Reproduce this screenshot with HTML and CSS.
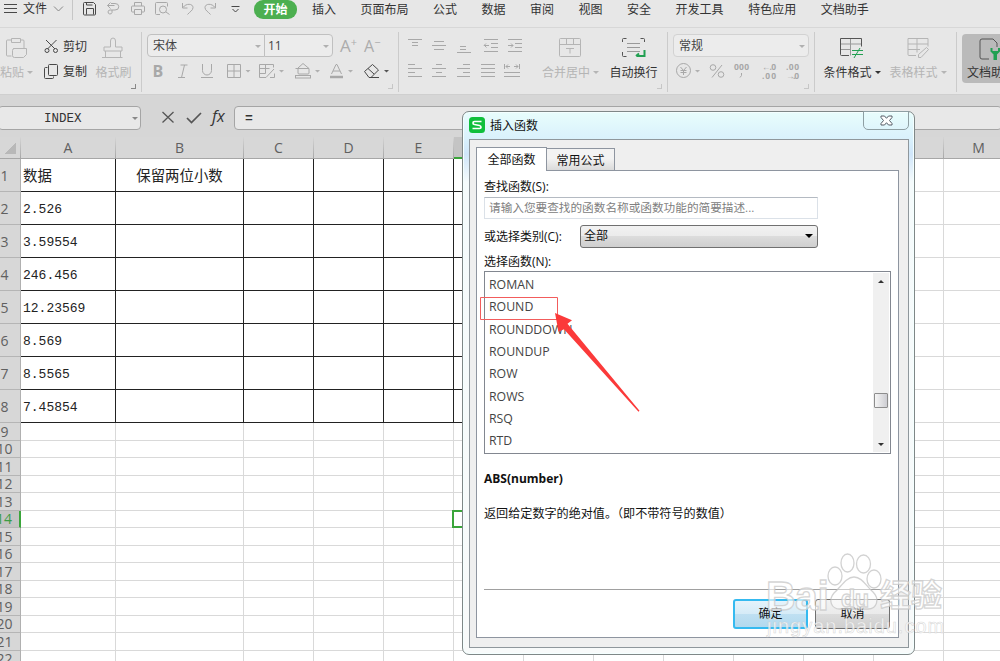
FILE: index.html
```html
<!DOCTYPE html>
<html lang="zh-CN">
<head>
  <meta charset="utf-8">
  <title>插入函数</title>
  <link rel="stylesheet" href="styles.css">
</head>
<body>
  <div class="menubar">
    <svg class="quick" width="250" height="20" viewBox="0 0 250 20">
      <g class="dark"><path d="M4 4.500h13M4 8.500h13M4 12.500h13"/></g>
      <g class="mid"><path d="M54 6.500l4.500 4.500 4.500-4.500"/></g>
      <path class="pale" d="M72.500 0v20"/>
      <g class="dark"><path d="M83.500 3.500q0-1 1-1h9l2 2v9.500q0 1-1 1h-10q-1 0-1-1zM86.500 14.500v-6h7v6M86.500 2.500v2.500h6"/></g>
      <g class="light">
        <path d="M111 3.500h4a3.500 3 0 0 1 0 6.500h-3v2.500a2 2 0 1 1-2-2.500h2M107.500 5.500h7M110.500 2.500l-3 3 3 3"/>
        <path d="M134.500 6v-3.500h7v3.500M134.500 12h-2q-1 0-1-1v-4q0-1 1-1h11q1 0 1 1v4q0 1-1 1h-2M134.500 9.500h7v5h-7z"/>
        <path d="M160 14.500h-3.500q-1 0-1-1v-10q0-1 1-1h10q1 0 1 1v3M166 12l3.500 2.500"/><circle cx="163" cy="9.500" r="3.500"/>
        <path d="M182.500 3v5h5M183 7.500c3-4.500 10-4 10 0c0 3-3 4-5.500 7"/>
        <path d="M215.500 3v5h-5M215 7.500c-3-4.500-10-4-10 0c0 3 3 4 5.500 7"/>
      </g>
      <path class="dark" d="M231.500 6.500h8M232.500 9l3 3 3-3"/>
    </svg>
    <span class="file">文件</span>
    <nav class="tabs">
      <span class="active">开始</span>
      <span>插入</span><span>页面布局</span><span>公式</span><span>数据</span><span>审阅</span><span>视图</span><span>安全</span><span>开发工具</span><span>特色应用</span><span>文档助手</span>
    </nav>
  </div>

  <div class="ribbon">
    <div class="group clipboard">
      <div class="tool paste off">
        <svg width="24" height="22"><path d="M6 3h-3.500q-1 0-1 1v14q0 1 1 1h4M16 3h2q1 0 1 1v7M6.500 1.500h9v4h-9zM8.500 11.500h13v6l-3 3h-9q-2 0-2-2v-5q0-2 2-2z"/></svg>
        <span>粘贴<i></i></span>
      </div>
      <div class="pair">
        <div><svg class="dark" width="15" height="15"><path d="M2 1l9 9M12.500 1l-9 9"/><circle cx="3" cy="11.500" r="2"/><circle cx="11.500" cy="11.500" r="2"/></svg>剪切</div>
        <div><svg class="dark" width="15" height="15"><path d="M4.500 1.500q0-1 1-1h7q1 0 1 1v9q0 1-1 1h-7q-1 0-1-1zM3.500 3.500h-2q-1 0-1 1v9q0 1 1 1h7q1 0 1-1v-1"/></svg>复制</div>
      </div>
      <div class="tool brush off">
        <svg width="22" height="22"><path d="M8.500 10v-6a2.500 3 0 0 1 5 0v6h6.500v4h-18v-4h6.500M3.500 14v6M18.500 14v6.500M0 20.500h20.500"/></svg>
        <span>格式刷</span>
      </div>
      <b class="corner strong"></b>
    </div>

    <div class="group font">
      <div class="boxes">
        <div class="combo family">宋体<i></i></div><div class="combo size">11<i></i></div>
        <span class="grow">A<sup>+</sup></span><span class="shrink">A<sup>−</sup></span>
      </div>
      <svg class="light" width="245" height="20" viewBox="147 61 245 20">
        <text x="152.500" y="76.500" class="t-bold">B</text>
        <path d="M180.500 65h7M178 77.500h7M184.500 65l-3 12.500"/>
        <path d="M202.500 64v6.500a4.500 4.500 0 0 0 9 0v-6.500M201 77.500h12"/>
        <path d="M227.500 64.500h13v13h-13zM234 64.500v13M227.500 71h13"/>
        <path d="M266 77.500h-6.500v-13h14v3M259.500 68.500h10M259.500 73.500h6M265.500 64.500v9M274 69l-8 8.500M270 77.500h4.500v-4"/>
        <path d="M303 63.500l6 5v4.500q0 1-1 1h-9q-1 0-1-1v-5zM295.500 68.500h13.500"/><rect x="295.500" y="75.500" width="15" height="2.500"/>
        <path d="M331.500 74l4.500-9.500h1l4.500 9.500M333 71h7"/><path d="M330 77h13" stroke-width="2.500"/>
        <path class="dark" d="M364.500 71.500l8-7 6 5.500-7.500 7.500h-2zM368 68.500l6 5.500M370 77.500h9"/>
        <path class="fill" d="M245.500 70h5l-2.500 2.500zM279 70h5l-2.500 2.500zM315 70h5l-2.500 2.500zM348 70h5l-2.500 2.500z"/>
        <path class="fill deep" d="M384 70h5l-2.500 2.500z"/>
      </svg>
      <b class="corner"></b>
    </div>

    <div class="group align">
      <svg class="light" width="118" height="42" viewBox="406 37 118 42">
        <path d="M408 39.500h14M412 42.500h6M412 45.500h6"/>
        <path d="M434 41.500h10M432 45.500h14M434 49.500h10"/>
        <path d="M460 46.500h6M460 49.500h6M457 52.500h14"/>
        <path d="M484 39.500h14M491 43.500h7M491 47.500h7M484 51.500h14M489 45.500h-5l2-2M484.500 45.500l2 2"/>
        <path d="M508 39.500h14M515 43.500h7M515 47.500h7M508 51.500h14M508 45.500h5l-2-2M513 45.500l-2 2"/>
        <path d="M408 64.500h7M408 68.500h14M408 72.500h7M408 76.500h14"/>
        <path d="M436 64.500h6M432 68.500h14M436 72.500h6M432 76.500h14"/>
        <path d="M463 64.500h7M457 68.500h13M463 72.500h7M457 76.500h13"/>
        <path d="M481 64.500h14M481 68.500h14M481 72.500h14M481 76.500h14"/>
        <path d="M504.500 64v5M519.500 64v5M510 66.500h-4l2-2M506 66.500l2 2M514 66.500h4l-2-2M518 66.500l-2 2M504 72.500h16M504 76.500h16"/>
      </svg>
      <div class="tool merge off">
        <svg width="24" height="22"><path d="M1.500 2.500q0-1 1-1h19q1 0 1 1v16q0 1-1 1h-19q-1 0-1-1zM1.500 7.500h21M8.500 1.500v6M15.500 1.500v6M8 11.500h8M12 11.500v5"/></svg>
        <span>合并居中<i></i></span>
      </div>
      <div class="tool wrap">
        <svg width="26" height="22"><path d="M1.500 5v-2.500q0-1 1-1h3M19.500 1.500h3q1 0 1 1v2.500M1.500 15v3.500q0 1 1 1h3"/><path class="gray" d="M6 6.500h13M6 10.500h13M6 14.500h13"/><path class="green thick" d="M23.500 13v6h-8M18 16.500l-3 2.500"/></svg>
        <span>自动换行</span>
      </div>
      <b class="corner"></b>
    </div>

    <div class="group number">
      <div class="combo format">常规<i></i></div>
      <svg class="light" width="132" height="20" viewBox="675 61 132 20">
        <circle cx="685.500" cy="70.500" r="7"/><path d="M682.500 67l3 3.500 3-3.500M685.500 70.500v4.500M682.500 70.500h6M682.500 72.500h6"/>
        <path class="fill" d="M697 70h5l-2.500 2.500z"/>
        <circle cx="715" cy="67.500" r="2.800"/><circle cx="723" cy="74.500" r="2.800"/><path d="M724 65l-10 12.500"/>
        <text x="736" y="70" textLength="15">000</text><path d="M743.500 73v2.500l-1.500 2"/>
        <text x="764" y="70" textLength="14">←.0</text><text x="764" y="79" textLength="14">.00</text>
        <text x="788" y="70" textLength="13">.00</text><text x="788" y="79" textLength="13">→.0</text>
      </svg>
      <b class="corner"></b>
    </div>

    <div class="group styles">
      <div class="tool cond">
        <svg width="24" height="22"><path class="gray" d="M2 7h20M11.500 1.500v17M2 12.500h10"/><path d="M10 18.500h-7.500q-1 0-1-1v-16h21v8"/><path class="green" d="M13 13.500h11M13 17.500h11M21 11l-6 10"/></svg>
        <span>条件格式<i></i></span>
      </div>
      <div class="tool cells off">
        <svg width="24" height="22"><path d="M10 18.500h-7q-1 0-1-1v-16h20v8M2 7h20M2 12.500h12M11 1.500v14M12.500 20.500v-3l8-7 2 2-7.500 8z"/></svg>
        <span>表格样式<i></i></span>
      </div>
    </div>

    <div class="helper tool">
      <svg width="26" height="22"><path d="M11 21h-7q-2 0-2-2v-16q0-2 2-2h11l4 4v4"/><path class="green thick" d="M13.500 10v3l3 3v6M21 10v3l-3 3v6M14 14h7"/></svg>
      <span>文档助手</span>
    </div>
  </div>

  <div class="formula">
    <div class="namebox">INDEX<i></i></div>
    <svg width="62" height="16"><path d="M1.500 2l11 10.500M12.500 2l-11 10.500" stroke-width="1.300"/><path d="M26 8l4.500 4.500 9.500-9.500" stroke-width="1.700"/></svg>
    <em>fx</em>
    <div class="input">=</div>
  </div>

  <div class="sheet" id="sheet"></div>

  <div class="dialog">
    <div class="title">
      <svg width="16" height="16"><rect width="16" height="16" rx="3.500" fill="#0fbf3c" stroke="none"/><path d="M12.500 4.500h-7q-1.500 0-1.500 1.500t1.500 1.500l5 1q1.500.4 1.500 1.700t-1.500 1.300h-7" fill="none" stroke="#fff" stroke-width="1.700"/></svg>
      <span>插入函数</span>
      <div class="close"><svg width="13" height="11"><path d="M1 1h3.500l2 2.300 2-2.300h3.500v1.500l-2.500 3 2.500 3v1.500h-3.500l-2-2.300-2 2.300h-3.500v-1.500l2.500-3-2.500-3z" fill="#fff" stroke="#565d66"/></svg></div>
    </div>
    <div class="client">
      <div class="dialog-tabs"><span class="on">全部函数</span><span>常用公式</span></div>
      <div class="pane">
        <label>查找函数(S):</label>
        <div class="search">请输入您要查找的函数名称或函数功能的简要描述...</div>
        <div class="category"><label>或选择类别(C):</label><div class="select">全部<i></i></div></div>
        <label class="choose">选择函数(N):</label>
        <div class="list">
          <ul>
            <li>ROMAN</li><li>ROUND</li><li>ROUNDDOWN</li><li>ROUNDUP</li><li>ROW</li><li>ROWS</li><li>RSQ</li><li>RTD</li>
          </ul>
          <div class="scroll"><i class="up"></i><b></b><i></i></div>
        </div>
        <h3>ABS(number)</h3>
        <p>返回给定数字的绝对值。（即不带符号的数值）</p>
        <div class="buttons"><button class="ok">确定</button><button>取消</button></div>
      </div>
    </div>
  </div>

  <!-- callout on the ROUND entry -->
  <svg class="callout" width="162" height="120" viewBox="480 296 162 120">
    <path d="M480.500 297.500h77v22h-77z" stroke="#f25c5c"/>
    <path class="arrow" d="M555 313l17 7.300-4.500 3.500 72 87-1 1-74.500-82.500-5.500 2.500z"/>
  </svg>

  <div class="watermark">
    <svg width="56" height="58"><ellipse cx="8" cy="23" rx="7" ry="9"/><ellipse cx="20.500" cy="10" rx="6.500" ry="9"/><ellipse cx="36.500" cy="11" rx="7" ry="9"/><ellipse cx="47" cy="26" rx="7" ry="9"/><path d="M27 24c8 0 12 9 19 15c7 7 4 17-5 17h-28c-9 0-12-9-6-16c7-6 12-16 20-16z"/></svg>
    <span class="bai">Bai</span><span class="du">du</span><span class="jing">经验</span>
    <span class="url">jingyan.baidu.com</span>
  </div>

  <script>
    const sheet = document.getElementById('sheet');
    const cols = ['', 'A', 'B', 'C', 'D', 'E', 'F', 'G', 'H', 'I', 'J', 'K', 'L', 'M'];
    const values = ['数据', '2.526', '3.59554', '246.456', '12.23569', '8.569', '8.5565', '7.45854'];

    function add(cls, text) {
      const cell = document.createElement('div');
      cell.className = cls;
      cell.textContent = text || '';
      sheet.appendChild(cell);
    }

    cols.forEach(function(name) {
      add(name === '' ? 'head all' : name === 'F' ? 'head picked' : 'head', name);
    });

    for (let r = 1; r <= 22; r++) {
      add(r === 14 ? 'num picked' : 'num', String(r));
      for (let c = 1; c < cols.length; c++) {
        let cls = 'cell';
        if (r <= 8 && c <= 6) cls += ' framed';
        if (r === 14 && c === 6) cls += ' cursor';
        if (r === 1 && c === 2) cls += ' center';
        let text = c === 1 ? values[r - 1] : (r === 1 && c === 2 ? '保留两位小数' : '');
        add(cls, text);
      }
    }
  </script>
</body>
</html>
```
FILE: styles.css
```css
* {
  box-sizing: border-box;
}

body {
  margin: 0;
  width: 1000px;
  height: 661px;
  overflow: hidden;
  position: relative;
  background: #d6d6d6;
  color: #333;
  font: 12px/16px "Open Sans", "Noto Sans CJK SC", sans-serif;
}

svg {
  display: block;
  flex: none;
  fill: none;
  stroke: #555;
}

i {
  display: inline-block;
  border: 3px solid transparent;
  border-top-color: currentColor;
  border-bottom: 0;
}

.dark { stroke: #484848; }
.mid { stroke: #888; }
.light { stroke: #a8a8a8; }
.pale { stroke: #c6c6c6; }
.gray { stroke: #999; }
.green { stroke: #22a052; }
.thick { stroke-width: 2; }
.fill { fill: #b0b0b0; stroke: none; }
.deep { fill: #555; }

.menubar {
  height: 28px;
  background: #e7e7e7;
  border-bottom: 1px solid #d7d7d7;
  display: flex;
  position: relative;
}

.file {
  position: absolute;
  left: 23px;
  top: 1px;
}

.tabs {
  display: flex;
  gap: 24.5px;
  height: 19px;
  margin-left: 4px;
  line-height: 20px;
  white-space: nowrap;
}

.tabs .active {
  background: #4caf50;
  color: #fff;
  font-weight: bold;
  border-radius: 9px;
  width: 43px;
  text-align: center;
  margin-right: -9.5px;
}

.ribbon {
  height: 67px;
  background: #e7e7e7;
  border-bottom: 1px solid #cfcfcf;
  display: flex;
  overflow: hidden;
}

.group {
  position: relative;
  height: 60px;
  margin-top: 4px;
  border-right: 1px solid #cbcbcb;
  flex: none;
}

.clipboard { width: 142px; display: flex; }
.font { width: 257px; padding: 2px 0 0 5px; }
.align { width: 269px; display: flex; padding-left: 7px; }
.align > svg { margin-top: 5px; }
.number { width: 147px; padding: 2px 0 0 5px; }
.styles { width: 142px; display: flex; }

.tool {
  display: flex;
  flex-direction: column;
  align-items: center;
  padding-top: 5px;
  white-space: nowrap;
}

.tool span {
  margin-top: 6px;
}

.tool i {
  margin: 0 0 3px 3px;
}

.off {
  color: #b5b5b5;
}

.off svg {
  stroke: #b5b5b5;
}

.paste { width: 33px; }
.brush { width: 41px; margin-left: 3px; }
.brush svg { margin-left: -2px; }
.merge { width: 55px; margin-left: 19px; }
.merge svg { margin-left: -2px; }
.wrap { width: 49px; margin-left: 11px; }
.cond { width: 56px; margin-left: 9px; }
.cells { width: 56px; margin-left: 10px; }

.cond svg {
  margin-left: -2px;
}

.pair {
  width: 46px;
  margin-left: 11px;
  padding-top: 7px;
}

.pair div {
  display: flex;
  gap: 4px;
  white-space: nowrap;
  margin-bottom: 9px;
}

.corner {
  position: absolute;
  right: 5px;
  bottom: 3px;
  width: 5px;
  height: 5px;
  border: solid #c6c6c6;
  border-width: 0 1px 1px 0;
}

.corner.strong {
  border-color: #888;
}

.boxes {
  display: flex;
  height: 27px;
}

.combo {
  height: 23px;
  border: 1px solid #c0c0c0;
  background: #ececec;
  display: flex;
  align-items: center;
  justify-content: space-between;
  padding: 1px 3px 0 5px;
  color: #444;
}

.combo i {
  color: #b0b0b0;
}

.family { width: 118px; border-radius: 4px 0 0 4px; }
.size { width: 69px; margin-left: -1px; padding-left: 3px; border-radius: 0 4px 4px 0; }
.format { width: 136px; margin-bottom: 4px; border-color: #d2d2d2; border-radius: 4px; }

.grow, .shrink {
  color: #acacac;
  font: 17px/24px "Open Sans", sans-serif;
  margin-left: 7px;
  white-space: nowrap;
}

.grow sup, .shrink sup {
  font-size: 11px;
  line-height: 0;
  vertical-align: 6px;
}

.shrink {
  margin-left: 7px;
  font-size: 16px;
}

svg text {
  font: bold 8.5px "Open Sans", sans-serif;
  fill: #a8a8a8;
  stroke: none;
}

svg .t-bold {
  font-size: 16px;
}

.helper {
  width: 60px;
  height: 49px;
  flex: none;
  margin: 6px 0 0 5px;
  padding: 4px 2px 0 0;
  background: #bababa;
  border-radius: 4px;
}

.helper span {
  margin-top: 5px;
}

.formula {
  height: 42px;
  padding-top: 11px;
  background: #d6d6d6;
  display: flex;
}

.namebox {
  width: 143px;
  height: 24px;
  margin-left: -2px;
  border: 1px solid #a5a5a5;
  border-radius: 4px;
  background: #e8e8e8;
  font: 12.5px/24px "Liberation Mono", monospace;
  padding-left: 45px;
  position: relative;
}

.namebox i {
  position: absolute;
  right: 2px;
  top: 10px;
  color: #888;
}

.formula svg {
  margin: 4px 0 0 20px;
}

.formula em {
  width: 11px;
  margin-left: -11px;
  font: italic 16px/21px "Open Sans", sans-serif;
}

.formula .input {
  flex: 1;
  height: 24px;
  margin: 0 -2px 0 11px;
  padding-left: 10px;
  border: 1px solid #a5a5a5;
  border-radius: 4px;
  background: #e8e8e8;
  font: bold 13px/24px "Liberation Mono", monospace;
}

.sheet {
  margin-left: -11px;
  width: 1042px;
  display: grid;
  grid-template-columns: 32px 95px 128px repeat(11, 70px);
  grid-template-rows: 22px repeat(8, 33px) repeat(14, 17.5px);
  background: #fff;
}

.head, .num {
  background: #d7d7d7;
  color: #606060;
  font: 14px/21px "Open Sans", sans-serif;
  text-align: center;
}

.head {
  border-bottom: 1px solid #b0b0b0;
  border-right: 1px solid;
  border-image: linear-gradient(#d7d7d7, #a5a5a5) 1;
}

.head.picked {
  background: #c4c4c4;
  border-image: none;
  border-right-color: #aaa;
  border-bottom: 2px solid #3aa53a;
}

.head.all {
  background: linear-gradient(135deg, transparent 50%, #b8b8b8 50%) 16px 6px / 11px 11px no-repeat #d7d7d7;
}

.num {
  border-right: 1px solid #b0b0b0;
  border-bottom: 1px solid #b5b5b5;
  display: flex;
  align-items: center;
  justify-content: center;
}

.num.picked {
  background: #c4c4c4;
  color: #3c9c44;
  border-right: 2px solid #3aa53a;
}

.cell {
  border-right: 1px solid #d9d9d9;
  border-bottom: 1px solid #d9d9d9;
  padding-left: 2px;
  color: #222;
  font: 13px/35px "Liberation Mono", "Noto Sans CJK SC", monospace;
  white-space: nowrap;
}

.framed {
  border-color: #222;
}

.cell:nth-child(16), .cell.center {
  font-family: "Noto Sans CJK SC", sans-serif;
  font-size: 14.4px;
  line-height: 31px;
}

.center {
  padding-left: 0;
  text-align: center;
}

.cursor {
  border: 2px solid #3aa53a;
  margin: -1px 0 0 -2px;
}

.dialog {
  position: absolute;
  left: 462px;
  top: 111px;
  width: 453px;
  height: 544px;
  border: 1px solid #7f8787;
  border-radius: 7px;
  background: linear-gradient(#e8fdfc, #d9f1fc 27px, #d0e6fa 42px, #f5fbfc 70px, #f8fafa);
  box-shadow: inset 0 0 0 1px #f4ffff;
  color: #111;
}

.title {
  height: 27px;
  padding: 5px 0 0 6px;
  display: flex;
  gap: 5px;
  position: relative;
}

.title span {
  padding-top: 1px;
}

.close {
  position: absolute;
  right: 5px;
  top: -1px;
  width: 46px;
  height: 19px;
  border: 1px solid #8e9fa3;
  border-radius: 0 0 5px 5px;
  display: flex;
  align-items: center;
  justify-content: center;
}

.client {
  margin: 0 5px 0 6px;
  height: 509px;
  background: #efefef;
  border: 1px solid #8f979c;
  padding: 7px 9px 10px 6px;
}

.dialog-tabs {
  display: flex;
  align-items: flex-end;
  height: 23px;
}

.dialog-tabs span {
  width: 69px;
  height: 22px;
  margin-left: -1px;
  border: 1px solid #8e95a0;
  border-bottom: 0;
  background: linear-gradient(#f3f3f3 45%, #dadada);
  line-height: 23px;
  text-align: center;
}

.dialog-tabs .on {
  width: 71px;
  height: 24px;
  margin: 0 0 -1px;
  background: #fff;
  position: relative;
}

.pane {
  height: 468px;
  background: #fff;
  border: 1px solid #8e95a0;
  padding: 8px 7px 0 7px;
}

.pane label {
  display: block;
}

.search {
  width: 334px;
  height: 22px;
  margin-top: 2px;
  padding-left: 4px;
  border: 1px solid #dbe1e8;
  border-top-color: #b4bac2;
  font-size: 11.65px;
  line-height: 20px;
  color: #808080;
}

.category {
  display: flex;
  align-items: center;
  justify-content: space-between;
  width: 334px;
  height: 23px;
  margin-top: 6px;
}

.select {
  width: 238px;
  height: 23px;
  border: 1px solid #707070;
  border-radius: 3px;
  background: linear-gradient(#f2f2f2, #ebebeb 50%, #dcdcdc 50%, #cfcfcf);
  padding: 0 4px 1px 3px;
  display: flex;
  align-items: center;
  justify-content: space-between;
}

.select i {
  border-width: 4px 4px 0;
  border-top-color: #000;
}

.choose {
  margin-top: 6px;
}

.list {
  height: 183px;
  margin-top: 1px;
  border: 1px solid #828790;
  display: flex;
  justify-content: space-between;
}

ul {
  list-style: none;
  margin: 2px 0 0 4px;
  padding: 0;
  font-size: 12.3px;
  line-height: 22.35px;
  color: #444;
}

.scroll {
  width: 16px;
  margin: 1px;
  background: #f0f0f0;
  display: flex;
  flex-direction: column;
  align-items: center;
  padding: 7px 0 6px;
}

.scroll i {
  color: #333;
}

.scroll .up {
  transform: rotate(180deg);
}

.scroll b {
  width: 14px;
  height: 15px;
  margin: auto 0 35px;
  border: 1px solid #8d8d8d;
  border-radius: 1px;
  background: linear-gradient(90deg, #f5f5f5, #cdcdd2);
}

h3 {
  margin: 17px 0 0;
  font-size: 12px;
  line-height: 16px;
}

p {
  margin: 19px 0 0;
  font-size: 12.1px;
  white-space: nowrap;
}

.buttons {
  margin-top: 67px;
  padding: 9px 1px 0 0;
  border-top: 1px solid #a0a0a0;
  display: flex;
  justify-content: flex-end;
  gap: 7px;
}

button {
  width: 75px;
  height: 30px;
  padding: 0;
  border: 1px solid #707070;
  border-radius: 3px;
  background: linear-gradient(#f2f2f2, #ebebeb 50%, #dcdcdc 50%, #cfcfcf);
  color: #111;
  font: inherit;
}

.ok {
  border: 2px solid #35baf0;
  background: linear-gradient(#e5f3fb, #d5ebf7 50%, #bfe0f2 50%, #b2d9ee);
}

.callout {
  position: absolute;
  left: 480px;
  top: 296px;
}

.arrow {
  fill: #fb3a3a;
  stroke: none;
}

.watermark {
  position: absolute;
  left: 766px;
  top: 552px;
  width: 190px;
  height: 92px;
  color: rgba(255, 255, 255, 0.65);
  -webkit-text-stroke: 1.3px rgba(200, 200, 200, 0.75);
  white-space: nowrap;
}

.watermark svg {
  position: absolute;
  left: 61px;
  top: 1px;
  fill: rgba(255, 255, 255, 0.45);
  stroke: rgba(195, 195, 195, 0.75);
  stroke-width: 1.3;
}

.watermark span {
  position: absolute;
}

.watermark .bai {
  left: 0;
  top: 24px;
  font: bold 41px/40px "Liberation Sans", sans-serif;
  letter-spacing: -0.5px;
}

.watermark .du {
  left: 75px;
  top: 34px;
  font: bold 23px/26px "Liberation Sans", sans-serif;
}

.watermark .jing {
  left: 114px;
  top: 24px;
  font: bold 31px/34px "Noto Sans CJK SC", sans-serif;
}

.watermark .url {
  left: 1px;
  top: 63px;
  font: 20px/22px "Liberation Sans", sans-serif;
  letter-spacing: 1px;
  color: rgba(255, 255, 255, 0.75);
  -webkit-text-stroke: 0.6px rgba(200, 200, 200, 0.7);
}
```
